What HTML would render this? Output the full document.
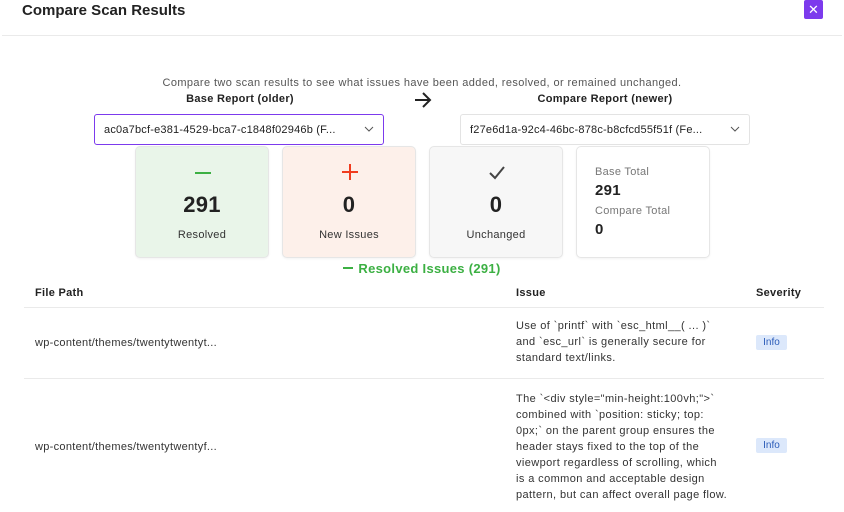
<!DOCTYPE html>
<html><head><style>
*{margin:0;padding:0;box-sizing:border-box}
body{width:844px;height:512px;overflow:hidden;background:#fff;font-family:"Liberation Sans",sans-serif;color:#222;position:relative;letter-spacing:0.3px}
.a{position:absolute}
.card{position:absolute;top:146px;width:134px;height:112px;border-radius:5px;border:1px solid #e6e6e6;text-align:center;box-shadow:0 1px 2px rgba(0,0,0,0.05)}
.card .n{position:absolute;top:45px;left:0;right:0;font-size:22px;font-weight:bold;color:#222}
.card .l{position:absolute;top:82px;left:0;right:0;font-size:11px;color:#333}
.sel{position:absolute;top:114px;width:290px;height:31px;border:1px solid #e3e3e3;border-radius:3px;font-size:11px;padding:9px 0 0 9px;color:#222;letter-spacing:0.2px}
.sel svg{position:absolute;right:9px;top:11px}
.t{font-size:11px;line-height:16px;color:#333}
.badge{position:absolute;left:756px;width:31px;height:15px;background:#dce8fb;color:#2b5cb8;font-size:10px;text-align:center;line-height:15px;border-radius:2px;letter-spacing:0}
</style></head><body>
<div class="a" style="left:22px;top:2px;font-size:15px;font-weight:bold;color:#222;letter-spacing:0">Compare Scan Results</div>
<div class="a" style="left:804px;top:0;width:19px;height:19px;background:#7c3aed;border-radius:2px;color:#fff;font-size:13px;text-align:center;line-height:19px;letter-spacing:0">✕</div>
<div class="a" style="left:2px;top:35px;width:840px;height:1px;background:#eaeaea"></div>
<div class="a" style="left:0;width:844px;top:77px;text-align:center;font-size:11px;color:#555;letter-spacing:0.4px">Compare two scan results to see what issues have been added, resolved, or remained unchanged.</div>
<div class="a" style="left:140px;width:200px;top:93px;text-align:center;font-size:11px;font-weight:bold">Base Report (older)</div>
<div class="a" style="left:505px;width:200px;top:93px;text-align:center;font-size:11px;font-weight:bold">Compare Report (newer)</div>
<svg class="a" style="left:413px;top:91px" width="20" height="18" viewBox="0 0 20 18"><path d="M2 9H17M10 2L17 9L10 16" stroke="#222" stroke-width="2" fill="none"/></svg>
<div class="sel" style="left:94px;border-color:#7c3aed">ac0a7bcf-e381-4529-bca7-c1848f02946b (F...<svg width="10" height="7"><path d="M1 1L5 5L9 1" stroke="#555" fill="none"/></svg></div>
<div class="sel" style="left:460px">f27e6d1a-92c4-46bc-878c-b8cfcd55f51f (Fe...<svg width="10" height="7"><path d="M1 1L5 5L9 1" stroke="#555" fill="none"/></svg></div>
<div class="card" style="left:135px;background:#e9f5e9"><div class="a" style="left:59px;top:25px;width:16px;height:2px;background:#3cb043"></div><div class="n">291</div><div class="l">Resolved</div></div>
<div class="card" style="left:282px;background:#fdf0ea"><svg class="a" style="left:58px;top:16px" width="18" height="18"><path d="M9 1V17M1 9H17" stroke="#f03c1f" stroke-width="2"/></svg><div class="n">0</div><div class="l">New Issues</div></div>
<div class="card" style="left:429px;background:#f7f7f7"><svg class="a" style="left:58px;top:18px" width="18" height="16"><path d="M2 8L7 13L16 2" stroke="#444" stroke-width="2" fill="none"/></svg><div class="n">0</div><div class="l">Unchanged</div></div>
<div class="card" style="left:576px;background:#fff">
<div class="a" style="left:18px;top:19px;font-size:11px;color:#777">Base Total</div>
<div class="a" style="left:18px;top:35px;font-size:15px;font-weight:bold">291</div>
<div class="a" style="left:18px;top:58px;font-size:11px;color:#777">Compare Total</div>
<div class="a" style="left:18px;top:74px;font-size:15px;font-weight:bold">0</div></div>
<div class="a" style="left:0;width:844px;top:261px;text-align:center;font-size:13px;font-weight:bold;color:#3cb043"><span style="display:inline-block;width:10px;height:2px;background:#3cb043;vertical-align:4px;margin-right:5px"></span>Resolved Issues (291)</div>
<div class="a" style="left:35px;top:287px;font-size:11px;font-weight:bold">File Path</div>
<div class="a" style="left:516px;top:287px;font-size:11px;font-weight:bold">Issue</div>
<div class="a" style="left:756px;top:287px;font-size:11px;font-weight:bold">Severity</div>
<div class="a" style="left:24px;top:307px;width:800px;height:1px;background:#eaeaea"></div>
<div class="a t" style="left:35px;top:335px">wp-content/themes/twentytwentyt...</div>
<div class="a t" style="left:516px;top:318px;width:212px;letter-spacing:0.4px">Use of `printf` with `esc_html__( ... )` and `esc_url` is generally secure for standard text/links.</div>
<div class="badge" style="top:335px">Info</div>
<div class="a" style="left:24px;top:378px;width:800px;height:1px;background:#eaeaea"></div>
<div class="a t" style="left:35px;top:439px">wp-content/themes/twentytwentyf...</div>
<div class="a t" style="left:516px;top:391px;width:212px;letter-spacing:0.4px">The `&lt;div style="min-height:100vh;"&gt;` combined with `position: sticky; top: 0px;` on the parent group ensures the header stays fixed to the top of the viewport regardless of scrolling, which is a common and acceptable design pattern, but can affect overall page flow.</div>
<div class="badge" style="top:438px">Info</div>
</body></html>
